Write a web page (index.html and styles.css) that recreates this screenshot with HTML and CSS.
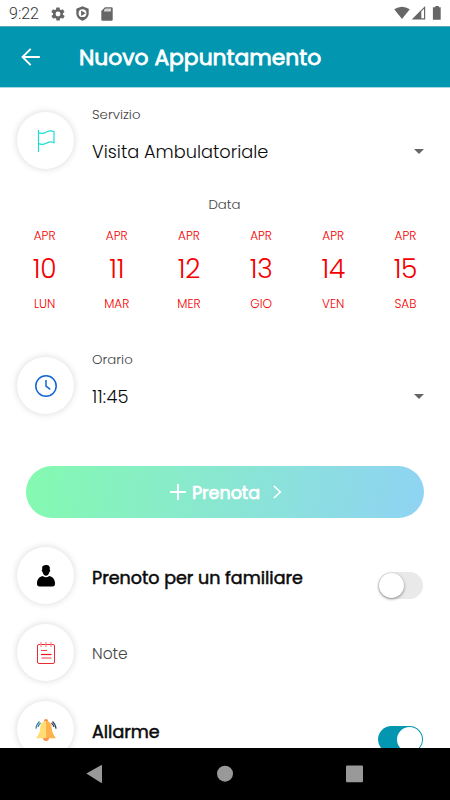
FILE: index.html
```html
<!DOCTYPE html>
<html lang="it">
<head>
<meta charset="utf-8">
<title>Nuovo Appuntamento</title>
<link rel="stylesheet" href="styles.css">
</head>
<body>
<div class="screen">
  <div class="status">
    <span class="clock">9:22</span>
    <svg class="s-gear" width="16" height="16" viewBox="0 0 24 24"><path fill="#666" d="M19.4 13a7.500 7.500 0 0 0 0-2l2.100-1.600c.2-.2.200-.4.100-.6l-2-3.500c-.1-.2-.4-.3-.6-.2l-2.500 1a7.300 7.300 0 0 0-1.700-1l-.4-2.600a.5.500 0 0 0-.5-.4h-4a.5.500 0 0 0-.5.400l-.4 2.600a8 8 0 0 0-1.700 1l-2.500-1a.5.500 0 0 0-.6.200l-2 3.500c-.1.200-.1.500.1.600L4.600 11a8 8 0 0 0 0 2l-2.100 1.600c-.2.200-.2.400-.1.600l2 3.500c.1.200.4.300.6.200l2.500-1a7.300 7.300 0 0 0 1.700 1l.4 2.600c0 .2.200.4.500.4h4c.3 0 .5-.2.500-.4l.4-2.600a8 8 0 0 0 1.700-1l2.500 1c.2.100.5 0 .6-.2l2-3.500c.1-.2.100-.5-.1-.6zM12 15.700a3.700 3.700 0 1 1 0-7.400 3.700 3.700 0 0 1 0 7.400z"/></svg>
    <svg class="s-shield" width="13" height="15" viewBox="0 0 13 15"><path fill="#666" d="M6.500.3 12.700 2.700v4.500c0 3.500-2.600 6.400-6.200 7.500C2.900 13.600.3 10.700.3 7.200V2.700z"/><circle cx="6.500" cy="7.200" r="3.900" fill="#fff"/><path fill="#666" d="M5.100 4.500v5.400l4.500-2.700z"/></svg>
    <svg class="s-card" width="12" height="14" viewBox="0 0 12 14"><path fill="#666" d="M4 .3h6.500q1.200 0 1.200 1.200v11q0 1.200-1.200 1.200h-9Q.3 13.700.3 12.500V4z"/><path fill="#d5d5d5" d="M4.500 1.500H10v3H3V3z"/></svg>
    <svg class="s-right" width="50" height="16" viewBox="0 0 50 16"><path fill="#666" d="M.2 3.300Q8 -2 15.800 3.300L8 13z"/><path fill="#666" d="M31.200 0v13.500H17.700z"/><path fill="#fff" d="M27.300 5.500 30 2.700v9.500h-2.700z"/><path fill="#666" d="M41.300 1.300V0h3.500v1.300h1.900v12.500h-7.800V1.300z"/></svg>
  </div>
  <header class="bar">
    <svg class="back" width="20" height="20" viewBox="0 0 20 20"><path d="M18.800 10H2M9.700 1.800 1.500 10l8.200 8.200" fill="none" stroke="#fff" stroke-width="1.900"/></svg>
    <h1>Nuovo Appuntamento</h1>
  </header>
  <main>
    <section class="row select-row">
      <div class="disc"><svg width="24" height="24" viewBox="0 0 24 24" fill="none" stroke="#1fdcd3" stroke-width="1.200"><path d="M4.500 1v22M4.500 3.500C9 5.500 10.500 4 13 2.700s4-1.400 7-.2v11.200c-3-1.500-4.500-1-7 .2s-4.500 2.600-8.500.6"/></svg></div>
      <div class="field"><span class="label">Servizio</span><div class="value"><span>Visita Ambulatoriale</span><i class="caret"></i></div></div>
    </section>
    <h2>Data</h2>
    <section class="days">
      <div class="day"><span>APR</span><b>10</b><span>LUN</span></div>
      <div class="day"><span>APR</span><b>11</b><span>MAR</span></div>
      <div class="day"><span>APR</span><b>12</b><span>MER</span></div>
      <div class="day"><span>APR</span><b>13</b><span>GIO</span></div>
      <div class="day"><span>APR</span><b>14</b><span>VEN</span></div>
      <div class="day"><span>APR</span><b>15</b><span>SAB</span></div>
    </section>
    <section class="row select-row time-row">
      <div class="disc"><svg width="24" height="24" viewBox="0 0 24 24" fill="none" stroke="#1365d2" stroke-width="1.500"><circle cx="12" cy="12" r="10.200"/><path d="M12 6v6.200l4.200 3.100"/></svg></div>
      <div class="field"><span class="label">Orario</span><div class="value"><span class="time">11:45</span><i class="caret"></i></div></div>
    </section>
    <button class="book">
      <svg width="16" height="16" viewBox="0 0 16 16"><path d="M8 0v16M0 8h16" stroke="#fff" stroke-width="2"/></svg>
      <span>Prenota</span>
      <svg width="9" height="14" viewBox="0 0 9 14"><path d="M1 1l6.200 6L1 13" fill="none" stroke="#fff" stroke-width="1.700"/></svg>
    </button>
    <section class="row item">
      <div class="disc"><svg width="24" height="24" viewBox="0 0 24 24"><path d="M8.300 5.500C7.600 2 9.500 1.300 11 1.300 14.500.5 16.500 2.500 15.700 5.500c.9.300.5 2-.3 2.400-.4 2.300-1.900 3.900-3.400 3.900S9 10.200 8.600 7.900c-.8-.4-1.200-2.100-.3-2.400zM8.700 12q3.300 2.500 6.600 0c4 1 5.600 3.500 5.700 7.500q.1 3-2.500 3h-13q-2.600 0-2.500-3c.1-4 1.700-6.500 5.700-7.500z"/></svg></div>
      <span class="strong">Prenoto per un familiare</span>
      <div class="switch"></div>
    </section>
    <section class="row item">
      <div class="disc"><svg width="24" height="24" viewBox="0 0 24 24" fill="none" stroke="#e8141b"><rect x="3.500" y="3.500" width="17" height="19" rx="1.500" stroke-width=".9"/><path d="M7 13.500h10.500" stroke-width="1.200"/><path d="M7 9.500h6M7.500 17h10" stroke-width=".8"/><path d="M7 1v5M12 1v5M17 1v5" stroke="#f58b8e" stroke-width="1.200"/></svg></div>
      <span class="note">Note</span>
    </section>
    <section class="row item">
      <div class="disc"><svg width="24" height="24" viewBox="0 0 24 24"><path d="M9 20h6a3 3 0 0 1-6 0z" fill="#f98b45"/><circle cx="12" cy="3" r="2" fill="#f98b45"/><path d="M12 3C8 3 6.500 6 6.300 10S5 16 2 20.300h10z" fill="#ffdc74"/><path d="M12 3c4 0 5.500 3 5.700 7s1.300 6 4.300 10.300H12z" fill="#feb24d"/><path d="M5.500 3.500Q2.200 6.500 2 10.800M6.600 5Q4.500 7 4.100 9" stroke="#35819a" fill="none" stroke-width="1.100"/><path d="M18.500 3.500Q21.800 6.500 22 10.800M17.400 5q2.100 2 2.500 4" stroke="#263f54" fill="none" stroke-width="1.100"/></svg></div>
      <span class="strong">Allarme</span>
      <div class="switch on"></div>
    </section>
  </main>
  <nav>
    <svg width="450" height="52" viewBox="0 0 450 52" fill="#999"><path d="M86.300 25.500 101 17.200q1-.4 1 .8v16q0 1.200-1 .8z"/><circle cx="225" cy="25.700" r="8"/><rect x="346" y="17.500" width="17" height="16.700" rx="1"/></svg>
  </nav>
</div>
</body>
</html>
```
FILE: styles.css
```css
* { box-sizing: border-box; }
body { margin: 0; background: #fff; color: #0a0a0a; font-family: Poppins, Inter, sans-serif; font-feature-settings: "cv11"; }
svg { display: block; flex: none; }
.screen { width: 450px; height: 800px; display: flex; flex-direction: column; overflow: hidden; }
.status { height: 26px; flex: none; display: flex; align-items: center; padding: 1px 6px 0 9px; }
.clock { width: 41px; font: 300 16px/26px Roboto, sans-serif; color: #333; }
.s-shield { margin-left: 10px; }
.s-card { margin-left: 12px; }
.s-right { margin-left: auto; }
.bar { height: 62px; flex: none; background: #0296b0; border-top: 1px solid #55a9b8; border-bottom: 1px solid #a5d8e1; display: flex; align-items: center; padding-left: 21px; }
h1 { margin: 1px 0 0 38px; font-size: 21.85px; line-height: 30px; font-weight: 400; -webkit-text-stroke: 0.8px #fff; color: #fff; white-space: nowrap; }
main { flex: 1; min-height: 0; overflow: hidden; display: flex; flex-direction: column; }
.row { display: flex; flex: none; padding: 0 25px 0 17px; }
.disc { width: 57px; height: 57px; margin-right: 1px; flex: none; border-radius: 50%; background: #fff; box-shadow: 0 0 7px rgba(0, 0, 0, .16); display: grid; place-items: center; }
.select-row { padding-top: 15px; height: 99px; }
.select-row .disc { margin-top: 9px; }
.field { flex: 1; margin-left: 17px; padding-top: 1px; }
.label { display: block; font-size: 13.3px; line-height: 22px; font-weight: 300; color: #444; }
.value { display: flex; justify-content: space-between; align-items: center; height: 30px; margin-top: 10px; padding-right: 1px; font-size: 17.75px; font-weight: 300; white-space: nowrap; }
.time { letter-spacing: 0.25px; }
.caret { border: 5.5px solid transparent; border-top: 5px solid #666; border-bottom: 0; }
h2 { margin: 8px 1px 0 0; height: 20px; flex: none; font-size: 13.3px; line-height: 20px; font-weight: 300; color: #444; text-align: center; }
.days { flex: none; display: grid; grid-template-columns: repeat(6, 1fr); margin: 11px 8.500px 0; color: #f40000; }
.day { display: flex; flex-direction: column; align-items: center; font-size: 12.1px; line-height: 20px; font-weight: 300; }
.day b { font-size: 26.5px; line-height: 46px; margin-bottom: 2px; font-weight: 300; letter-spacing: -0.3px; }
.time-row { margin-top: 19px; }
.book { width: 398px; height: 52px; flex: none; align-self: center; margin-top: 34px; padding: 0 0 0 2px; border: 0; border-radius: 26px; background: linear-gradient(100deg, #84fab0, #8fd3f4); display: flex; align-items: center; justify-content: center; font: 400 17.5px/26px Poppins, Inter, sans-serif; font-feature-settings: "cv11"; color: #fff; }
.book span { margin: 1px 13px 0 6px; -webkit-text-stroke: 0.7px #fff; }
.item { height: 77px; align-items: center; }
.book + .item { margin-top: 19px; }
.strong { margin-left: 17px; font-size: 17.5px; font-weight: 400; -webkit-text-stroke: 0.5px #0a0a0a; white-space: nowrap; padding-top: 4px; }
.note { margin-left: 17px; font-size: 15.5px; font-weight: 300; color: #444; padding-top: 1px; }
.switch { width: 45px; height: 27px; margin: 20px 2px 0 auto; padding: 1px; border-radius: 14px; background: #e9e9e9; display: flex; }
.switch::before { content: ""; width: 25px; height: 25px; border-radius: 50%; background: #fff; box-shadow: 0 1px 3px rgba(0, 0, 0, .45); }
.switch.on { background: #0296b0; justify-content: flex-end; }
.switch.on::before { box-shadow: none; }
nav { height: 52px; flex: none; background: #000; }
```
